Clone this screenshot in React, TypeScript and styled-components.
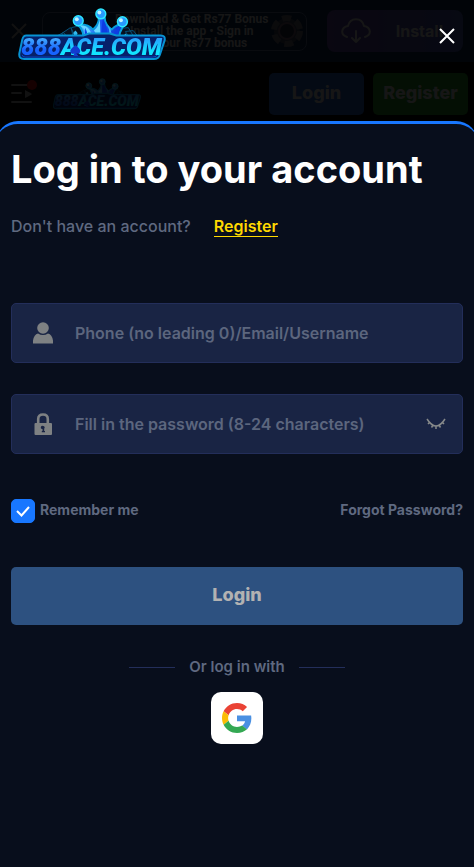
import React, { useId, useState } from "react";
import styled, { createGlobalStyle } from "styled-components";

const GlobalStyle = createGlobalStyle`
  * { box-sizing: border-box; }
  body { margin: 0; background: #000; font-family: Inter, "Open Sans", sans-serif; }
  button, input { font-family: inherit; }
  button { border: 0; padding: 0; cursor: pointer; }
`;

const Page = styled.div`
  min-height: 100vh;
`;

const PromoBar = styled.div`
  display: flex;
  align-items: center;
  gap: 14px;
  height: 62px;
  padding: 0 11px 0 10px;
  background: #0a2850;
`;

const IconButton = styled.button<{ $color: string }>`
  display: grid;
  place-items: center;
  flex: none;
  color: ${(p) => p.$color};
  background: none;
`;

const PromoCard = styled.div`
  flex: 1;
  display: flex;
  align-items: center;
  height: 39px;
  margin-right: 6px;
  border: 1px solid #5a6e96;
  border-radius: 8px;
`;

const PromoText = styled.p`
  flex: 1;
  margin: 0;
  padding-left: 72px;
  color: #ddd;
  font: 700 12px/12px Roboto, sans-serif;
  text-align: center;
  white-space: nowrap;
`;

const InstallButton = styled.button`
  display: flex;
  align-items: center;
  justify-content: space-between;
  width: 136px;
  height: 42px;
  padding: 0 20px 0 14px;
  border-radius: 8px;
  background: linear-gradient(90deg, #6446aa, #465ab4);
  color: #ddd;
  font-size: 16px;
  font-weight: 700;
`;

const NavBar = styled.header`
  display: flex;
  align-items: center;
  height: 64px;
  padding: 0 6px 0 10px;
`;

const NavBrand = styled.div`
  flex: 1;
  display: flex;
  margin-left: 15px;
`;

const NavButton = styled.button<{ $tone: string }>`
  width: 95px;
  height: 42px;
  margin-left: 9px;
  padding-bottom: 3px;
  border-radius: 5px;
  background: ${(p) => p.$tone};
  color: #ddd;
  font-size: 18px;
  font-weight: 800;
`;

const Backdrop = styled.div`
  position: fixed;
  inset: 0;
  display: flex;
  flex-direction: column;
  background: rgba(0, 0, 0, 0.9);
  overflow: auto;
`;

const DialogTop = styled.div`
  display: flex;
  align-items: flex-start;
  justify-content: space-between;
  flex: none;
  height: 121px;
  padding: 8px 18px 0 18px;
`;

const CloseSlot = styled.div`
  padding-top: 19px;
`;

const Sheet = styled.main`
  flex: 1 0 auto;
  margin: 0 -4px;
  padding: 20px 15px 24px;
  border-top: 3px solid #1877ff;
  border-radius: 22px 22px 0 0;
  background: #080e1c;
`;

const Title = styled.h1`
  margin: 0;
  color: #fff;
  font-size: 38px;
  font-weight: 700;
  line-height: 50px;
  white-space: nowrap;
`;

const Prompt = styled.p`
  display: flex;
  gap: 23px;
  margin: 22px 0 66px;
  color: #5f6980;
  font-size: 16px;
  font-weight: 500;
  line-height: 20px;
`;

const RegisterLink = styled.a`
  color: #ffd900;
  font-weight: 600;
  text-decoration: none;
  border-bottom: 1px solid #ffd900;
`;

const Field = styled.label`
  display: flex;
  align-items: center;
  height: 60px;
  margin-bottom: 31px;
  padding: 0 16px 0 19px;
  border: 1px solid #232e5a;
  border-radius: 5px;
  background: #192444;
  color: #7e8183;
`;

const FieldInput = styled.input`
  flex: 1;
  min-width: 0;
  height: 24px;
  margin-left: 20px;
  padding: 0 0 1px;
  border: 0;
  outline: 0;
  background: none;
  color: #fff;
  font-size: 16px;
  font-weight: 600;
  &::placeholder { color: #5c667e; opacity: 1; }
`;

const OptionsRow = styled.div`
  display: flex;
  align-items: center;
  justify-content: space-between;
  height: 24px;
  margin: 45px 0 44px;
  color: #5f6980;
  font-size: 14px;
  font-weight: 700;
  line-height: 20px;
`;

const Remember = styled.label`
  display: flex;
  align-items: center;
  gap: 5px;
`;

const OptionText = styled.span`
  padding-bottom: 2px;
`;

const CheckSlot = styled.span`
  display: grid;
  width: 24px;
  height: 24px;
  & > * { grid-area: 1 / 1; }
  & > svg { pointer-events: none; }
`;

const Checkbox = styled.input`
  appearance: none;
  width: 24px;
  height: 24px;
  margin: 0;
  border: 1px solid #1877ff;
  border-radius: 5px;
  &:checked { background: #1877ff; }
`;

const PlainLink = styled.a`
  padding-bottom: 2px;
  color: inherit;
  text-decoration: none;
`;

const SubmitButton = styled.button`
  display: block;
  width: 100%;
  height: 58px;
  padding-bottom: 3px;
  border-radius: 5px;
  background: #2d5180;
  color: #b2b2b2;
  font-size: 18px;
  font-weight: 800;
`;

const Divider = styled.div`
  display: flex;
  align-items: center;
  justify-content: center;
  gap: 14px;
  margin: 32px 0 15px;
  color: #5f6980;
  font-size: 15px;
  font-weight: 600;
  line-height: 20px;
  &::before, &::after {
    content: "";
    width: 46px;
    height: 1px;
    background: #232e5a;
  }
`;

const GoogleButton = styled.button`
  display: grid;
  place-items: center;
  width: 52px;
  height: 52px;
  margin: 0 auto;
  border-radius: 10px;
  background: #fff;
`;

const LogoText = styled.text`
  font-family: Roboto, sans-serif;
  font-size: 24px;
  font-weight: 900;
  font-style: italic;
`;

function Logo({ width }: { width: number }) {
  const id = useId();
  const blue = `${id}b`;
  const cyan = `${id}c`;
  const horn = `${id}h`;
  return (
    <svg width={width} height={Math.round((width * 54) / 150)} viewBox="0 0 150 54" role="img" aria-label="888ACE.COM">
      <defs>
        <linearGradient id={blue} gradientUnits="userSpaceOnUse" x1="0" y1="30" x2="0" y2="48">
          <stop offset="0" stopColor="#45b0ff" />
          <stop offset="0.7" stopColor="#1763ff" />
        </linearGradient>
        <linearGradient id={cyan} gradientUnits="userSpaceOnUse" x1="0" y1="30" x2="0" y2="48">
          <stop offset="0" stopColor="#2a9cff" />
          <stop offset="0.8" stopColor="#12e4ff" />
        </linearGradient>
        <linearGradient id={horn} x1="0" y1="0" x2="1" y2="0">
          <stop offset="0" stopColor="#58c8ff" />
          <stop offset="0.5" stopColor="#1a55f5" />
          <stop offset="1" stopColor="#0a34c8" />
        </linearGradient>
      </defs>
      <g fill="#07101f" stroke="#075277" strokeWidth="1">
        <path d="M38 29 46 25 53 34 44 39ZM44 26 53 20 61 33 51 37ZM54 20 63 18 68 34 57 37Z" />
        <path d="M101 21 112 20 118 30 110 38 100 34ZM109 24 117 23 125 33 119 39Z" />
      </g>
      <path d="M60 17Q71 16 76 22 82 17 82 10h6q0 7 7 12 5-6 14-6-8 8-6 20H66Q68 22 60 17Z" fill={`url(#${horn})`} stroke="#079edc" strokeWidth="2" strokeLinejoin="round" />
      <path d="M63 18q12-1 13 18h-4q-1-13-9-18ZM83 11q-1 8-6 12 3 4 3 13h4Z" fill="#68d8ff" />
      <path d="M68 20q4 7 2 16h-3q1-10 1-16ZM86 11q-2 14-1 25h6q1-16-5-25ZM96 36q-1-14 10-19-7 7-5 19Z" fill="#0e3ce4" />
      <path d="M88 12q7 10 4 23 4-7 2-13Z" fill="#3fb0ff" />
      <g fill="#2899ff" stroke="#2ce8ff" strokeWidth="1.5">
        <circle cx="84" cy="6" r="5" />
        <circle cx="61" cy="13" r="5" />
        <circle cx="106" cy="14" r="5" />
      </g>
      <g fill="#bff5ff">
        <circle cx="82.5" cy="4.5" r="2" />
        <circle cx="59.5" cy="11.5" r="2" />
        <circle cx="104.5" cy="12.5" r="2" />
      </g>
      <path d="M58 23q4 3 1 5l2 2h-4l1-2q-4-1 0-5ZM109 26l3 3-3 3-2-3Z" fill="#32b8ef" />
      <path d="M8 28H66l6-2H93l7 2h45q5 0 4 5l-5 15q-1 4-6 4H6q-6 0-5-6l3-14q1-4 4-4Z" fill="#06206a" stroke="#0793d4" strokeWidth="2" strokeLinejoin="round" />
      <path d="M4 48q0 2 3 2H137q4 0 5-3" fill="none" stroke="#0b49c8" strokeWidth="1" />
      <LogoText x="3" y="48">
        <tspan fill={`url(#${blue})`}>888</tspan>
        <tspan fill={`url(#${cyan})`}>ACE.COM</tspan>
      </LogoText>
      <path d="M58 38q-6 4-5 7 2 3 4 1l-1 3h5l-2-3q4 1 4-2 0-3-5-6Z" fill="#123bd0" />
    </svg>
  );
}

const Cross = () => (
  <svg width="18" height="18" viewBox="0 0 18 18" fill="none" stroke="currentColor" strokeWidth="2">
    <path d="M2 2 16 16M16 2 2 16" />
  </svg>
);

const MenuIcon = () => (
  <svg width="28" height="28" viewBox="0 0 28 28">
    <path d="M2 5H21M2 13H11M2 22H21" stroke="#aaa" strokeWidth="2" strokeLinecap="round" />
    <path d="M15 10q6 3 7 4-1 1-7 4Z" fill="#aaa" />
    <circle cx="22" cy="5" r="5" fill="#e01010" />
  </svg>
);

const CloudIcon = () => (
  <svg width="30" height="26" viewBox="0 0 30 26" fill="none" stroke="currentColor" strokeWidth="2" strokeLinecap="round" strokeLinejoin="round">
    <path d="M6 19C-1 17 0 9 7 8c2-9 14-9 16 0 7 1 8 9 1 11M15 13v11M11 20l4 4 4-4" />
  </svg>
);

const ChipIcon = () => (
  <svg width="38" height="36" viewBox="0 0 38 36">
    <circle cx="19" cy="18" r="13" fill="#3f4760" stroke="#6d6d7c" strokeWidth="6" strokeDasharray="9 5" />
    <circle cx="19" cy="18" r="8" fill="#242b44" stroke="#776276" strokeWidth="2" />
  </svg>
);

const UserIcon = () => (
  <svg width="24" height="24" viewBox="0 0 24 24" fill="currentColor">
    <circle cx="12" cy="7" r="5.8" />
    <path d="M2 22.5v-3q1-6 5-7 5 3 10 0 4 1 5 7v3Z" />
  </svg>
);

const LockIcon = () => (
  <svg width="24" height="24" viewBox="0 0 24 24">
    <path d="M7.2 12V7q0-4.5 4.8-4.5T16.8 7v5" fill="none" stroke="currentColor" strokeWidth="2.6" />
    <rect x="3.5" y="11" width="17.5" height="12" rx="1" fill="currentColor" />
    <path d="M12.2 14a1.5 1.5 0 0 1 1 2.6V19h.8v1.200h-3.200V19h.7v-2h-.8a1.500 1.500 0 0 1 1.500-3Z" fill="#192444" />
  </svg>
);

const ClosedEyeIcon = () => (
  <svg width="20" height="12" viewBox="0 0 20 12" fill="none" stroke="currentColor" strokeWidth="1.5">
    <path d="M1 1q9 14 18 0M4 4 2 6M7 7 5.5 9.5M10 8v3M13 7l1.5 2.5M16 4l2 2" />
  </svg>
);

const CheckIcon = () => (
  <svg width="24" height="24" viewBox="0 0 24 24" fill="none" stroke="#fff" strokeWidth="2">
    <path d="m6 12 4.5 4.5L18 8" />
  </svg>
);

const GoogleIcon = () => (
  <svg width="30" height="30" viewBox="0 0 48 48">
    <path fill="#EA4335" d="M24 9.5c3.54 0 6.71 1.22 9.21 3.6l6.85-6.85C35.9 2.38 30.47 0 24 0 14.62 0 6.51 5.38 2.56 13.22l7.98 6.19C12.43 13.72 17.74 9.5 24 9.5z" />
    <path fill="#4A90E2" d="M46.98 24.55c0-1.57-.15-3.09-.38-4.55H24v9.02h12.94c-.58 2.96-2.26 5.48-4.78 7.18l7.73 6c4.51-4.18 7.09-10.36 7.09-17.65z" />
    <path fill="#FBBC05" d="M10.53 28.59c-.48-1.45-.76-2.99-.76-4.59s.27-3.14.76-4.59l-7.98-6.19C.92 16.46 0 20.12 0 24s.92 7.54 2.56 10.78l7.97-6.19z" />
    <path fill="#34A853" d="M24 48c6.48 0 11.93-2.13 15.89-5.81l-7.73-6c-2.15 1.45-4.92 2.3-8.16 2.3-6.26 0-11.57-4.22-13.47-9.91l-7.98 6.19C6.51 42.62 14.62 48 24 48z" />
  </svg>
);

export default function App() {
  const [remember, setRemember] = useState(true);
  const [showPassword, setShowPassword] = useState(false);
  return (
    <>
      <GlobalStyle />
      <Page>
        <PromoBar>
          <IconButton $color="#aaa" aria-label="Dismiss promotion"><Cross /></IconButton>
          <PromoCard>
            <PromoText>
              Download &amp; Get Rs77 Bonus<br />
              Install the app • Sign in<br />
              get your Rs77 bonus
            </PromoText>
            <ChipIcon />
          </PromoCard>
          <InstallButton><CloudIcon />Install</InstallButton>
        </PromoBar>
        <NavBar>
          <IconButton $color="#aaa" aria-label="Menu"><MenuIcon /></IconButton>
          <NavBrand><Logo width={88} /></NavBrand>
          <NavButton $tone="#2864c8">Login</NavButton>
          <NavButton $tone="#289628">Register</NavButton>
        </NavBar>
      </Page>
      <Backdrop role="dialog" aria-labelledby="login-title">
        <DialogTop>
          <Logo width={148} />
          <CloseSlot>
            <IconButton $color="#fff" aria-label="Close"><Cross /></IconButton>
          </CloseSlot>
        </DialogTop>
        <Sheet>
          <Title id="login-title">Log in to your account</Title>
          <Prompt>
            Don't have an account?
            <RegisterLink href="#register">Register</RegisterLink>
          </Prompt>
          <form onSubmit={(e) => e.preventDefault()}>
            <Field>
              <UserIcon />
              <FieldInput aria-label="Phone, email or username" placeholder="Phone (no leading 0)/Email/Username" />
            </Field>
            <Field>
              <LockIcon />
              <FieldInput type={showPassword ? "text" : "password"} aria-label="Password" placeholder="Fill in the password (8-24 characters)" />
              <IconButton type="button" $color="#86898a" aria-label="Show password" onClick={() => setShowPassword(!showPassword)}>
                <ClosedEyeIcon />
              </IconButton>
            </Field>
            <OptionsRow>
              <Remember>
                <CheckSlot>
                  <Checkbox type="checkbox" checked={remember} onChange={(e) => setRemember(e.target.checked)} />
                  {remember && <CheckIcon />}
                </CheckSlot>
                <OptionText>Remember me</OptionText>
              </Remember>
              <PlainLink href="#forgot">Forgot Password?</PlainLink>
            </OptionsRow>
            <SubmitButton type="submit">Login</SubmitButton>
          </form>
          <Divider>Or log in with</Divider>
          <GoogleButton aria-label="Log in with Google"><GoogleIcon /></GoogleButton>
        </Sheet>
      </Backdrop>
    </>
  );
}
